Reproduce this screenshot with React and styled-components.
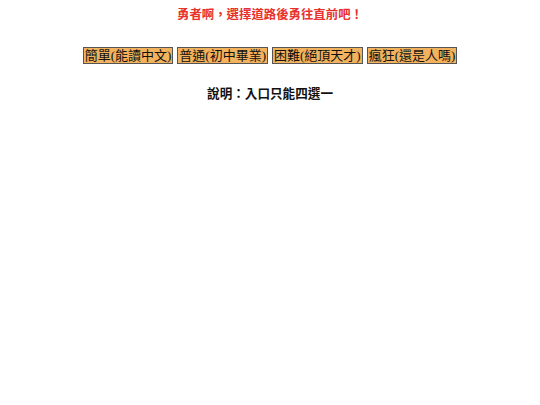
import styled, { createGlobalStyle } from 'styled-components';

const GlobalStyle = createGlobalStyle`
body {
    margin: 0;
    background: #ffffff;
    font-family: "Liberation Sans", "Noto Sans CJK TC", sans-serif;
}
`

const levels = ['簡單(能讀中文)', '普通(初中畢業)', '困難(絕頂天才)', '瘋狂(還是人嗎)'];

function App() {
    return (
        <Page>
            <GlobalStyle />
            <Title>勇者啊，選擇道路後勇往直前吧！</Title>
            <Choices>
                {levels.map((l) => (
                    <Choice key={l}>{l}</Choice>
                ))}
            </Choices>
            <Note>說明：入口只能四選一</Note>
        </Page>
    );
}

export default App;

const Page = styled.div`
width: 540px;
padding-top: 7px;
display: flex;
flex-direction: column;
align-items: center;
`

const Title = styled.h1`
margin: 0;
font-size: 12.4px;
line-height: 17px;
font-weight: bold;
color: #e8302c;
`

const Choices = styled.div`
margin-top: 23px;
display: flex;
gap: 4px;
`

const Choice = styled.button`
height: 17px;
padding: 0 1px;
font-family: "Liberation Serif", "Noto Sans CJK TC", serif;
font-size: 13px;
line-height: 15px;
color: #111;
background: #f2b25e;
border: 1px solid #555;
border-radius: 0;
cursor: pointer;
`

const Note = styled.p`
margin: 22px 0 0;
font-size: 12.6px;
line-height: 16px;
font-weight: bold;
color: #111;
`
